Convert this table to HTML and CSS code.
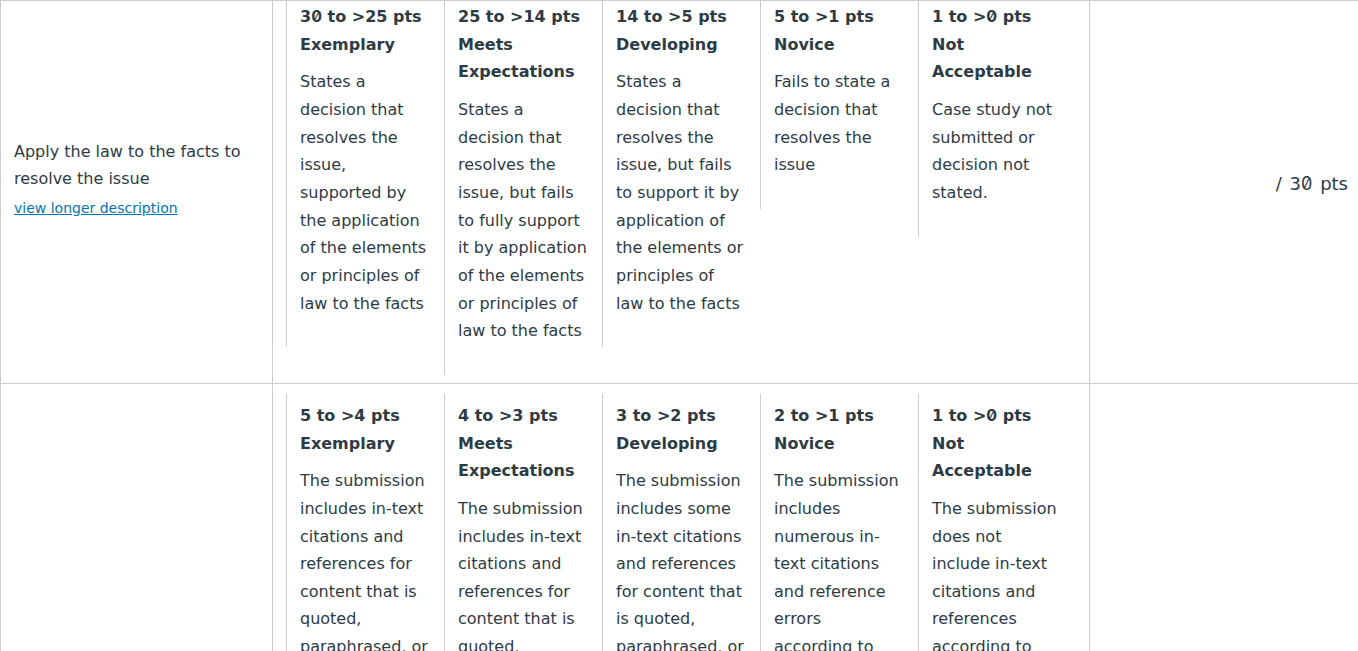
FILE: index.html
```html
<!DOCTYPE html>
<html lang="en">
<head>
<meta charset="utf-8">
<title>Rubric</title>
<link rel="stylesheet" href="styles.css">
</head>
<body>
<div class="rubric">
  <div class="row row--scrolled">
    <div class="criterion">
      <div class="criterion-text">Apply the law to the facts to resolve the issue</div>
      <a class="criterion-link" href="#">view longer description</a>
    </div>
    <div class="ratings">
      <div class="rating">
        <div class="rating-pts">3<span class="z">0</span> to &gt;25 pts</div>
        <div class="rating-title">Exemplary</div>
        <div class="rating-desc">States a decision that resolves the issue, supported by the application of the elements or principles of law to the facts</div>
      </div>
      <div class="rating">
        <div class="rating-pts">25 to &gt;14 pts</div>
        <div class="rating-title">Meets Expectations</div>
        <div class="rating-desc">States a decision that resolves the issue, but fails to fully support it by application of the elements or principles of law to the facts</div>
      </div>
      <div class="rating">
        <div class="rating-pts">14 to &gt;5 pts</div>
        <div class="rating-title">Developing</div>
        <div class="rating-desc">States a decision that resolves the issue, but fails to support it by application of the elements or principles of law to the facts</div>
      </div>
      <div class="rating">
        <div class="rating-pts">5 to &gt;1 pts</div>
        <div class="rating-title">Novice</div>
        <div class="rating-desc">Fails to state a decision that resolves the issue</div>
      </div>
      <div class="rating">
        <div class="rating-pts">1 to &gt;<span class="z">0</span> pts</div>
        <div class="rating-title">Not Acceptable</div>
        <div class="rating-desc">Case study not submitted or decision not stated.</div>
      </div>
    </div>
    <div class="points"><span class="points-text">/ 3<span class="z">0</span> pts</span></div>
  </div>
  <div class="row">
    <div class="criterion">
      <div class="criterion-text">Use APA in-text citations and references</div>
      <a class="criterion-link" href="#">view longer description</a>
    </div>
    <div class="ratings">
      <div class="rating">
        <div class="rating-pts">5 to &gt;4 pts</div>
        <div class="rating-title">Exemplary</div>
        <div class="rating-desc">The submission includes in-text citations and references for content that is quoted, paraphrased, or summarized according to APA style. The reference list is complete and correctly formatted, with every source cited in the text.</div>
      </div>
      <div class="rating">
        <div class="rating-pts">4 to &gt;3 pts</div>
        <div class="rating-title">Meets Expectations</div>
        <div class="rating-desc">The submission includes in-text citations and references for content that is quoted, paraphrased, or summarized with minor errors according to APA style. The reference list has minor formatting errors, such as missing italics, incorrect capitalization, or incomplete publication details that do not prevent the reader from locating each source.</div>
      </div>
      <div class="rating">
        <div class="rating-pts">3 to &gt;2 pts</div>
        <div class="rating-title">Developing</div>
        <div class="rating-desc">The submission includes some in-text citations and references for content that is quoted, paraphrased, or summarized with several errors according to APA style.</div>
      </div>
      <div class="rating">
        <div class="rating-pts">2 to &gt;1 pts</div>
        <div class="rating-title">Novice</div>
        <div class="rating-desc">The submission includes numerous in-text citations and reference errors according to APA style.</div>
      </div>
      <div class="rating">
        <div class="rating-pts">1 to &gt;<span class="z">0</span> pts</div>
        <div class="rating-title">Not Acceptable</div>
        <div class="rating-desc">The submission does not include in-text citations and references according to APA style.</div>
      </div>
    </div>
    <div class="points"><span class="points-text">/ 5 pts</span></div>
  </div>
</div>
</body>
</html>
```
FILE: styles.css
```css
html, body {
  margin: 0;
  padding: 0;
  background: #ffffff;
}

body {
  font-family: "DejaVu Sans", "Noto Sans", sans-serif;
  font-size: 16px;
  color: #2d3b45;
  height: 651px;
  overflow: hidden;
}

.z {
  font-family: "Inter", "DejaVu Sans", sans-serif;
  font-feature-settings: "zero" 1;
}

.rubric {
  border-top: 1px solid #c7cdd1;
  border-left: 1px solid #c7cdd1;
  overflow: hidden;
}

.row {
  display: grid;
  grid-template-columns: 272px 817px 1fr;
  border-bottom: 1px solid #c7cdd1;
}

.row--scrolled {
  margin-top: -16px;
}

.criterion {
  border-right: 1px solid #c7cdd1;
  padding: 0 14px 12px 13px;
  display: flex;
  flex-direction: column;
  justify-content: center;
  line-height: 27px;
}

.criterion-text {
  font-size: 16px;
}

.criterion-link {
  align-self: flex-start;
  font-size: 14px;
  line-height: 20px;
  margin-top: 6px;
  color: #0374b5;
  text-decoration: underline;
}

.ratings {
  border-right: 1px solid #c7cdd1;
  display: flex;
  align-items: flex-start;
  padding: 10px 13px 8px 13px;
}

.rating {
  flex: 0 0 158px;
  box-sizing: border-box;
  border-left: 1px solid #c7cdd1;
  padding: 8px 14px 30px 13px;
  line-height: 27.65px;
}

.rating-pts,
.rating-title {
  font-weight: 700;
}

.rating-desc {
  margin-top: 10px;
}

.points {
  display: flex;
  align-items: center;
  justify-content: flex-end;
  padding-right: 10px;
  font-size: 18px;
  word-spacing: 2px;
}
```
